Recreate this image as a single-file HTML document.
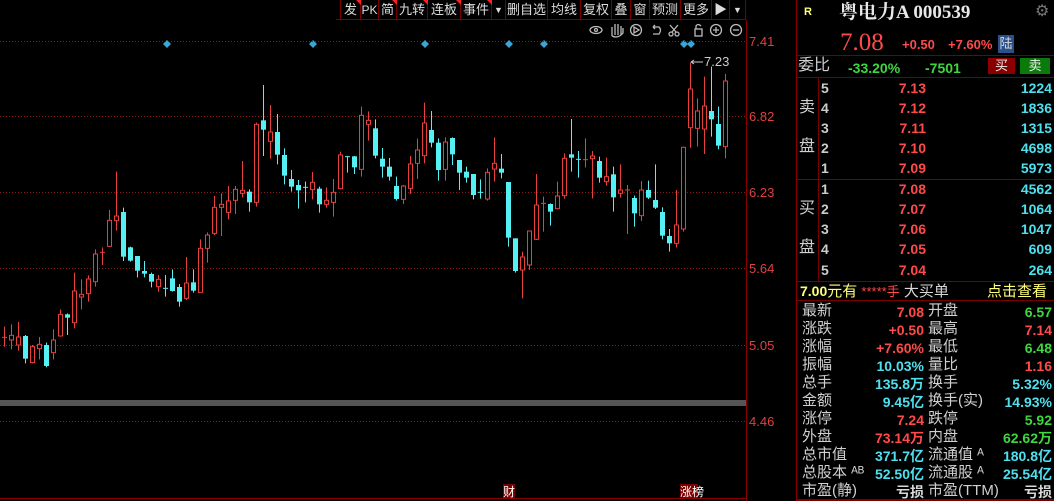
<!DOCTYPE html>
<html><head><meta charset="utf-8">
<style>
*{margin:0;padding:0;box-sizing:border-box}
body{width:1054px;height:501px;background:#000;overflow:hidden;position:relative;font-family:"Liberation Sans","Noto Sans CJK SC",sans-serif;}
.a{position:absolute;white-space:nowrap;line-height:1}
.tb{position:absolute;top:0;height:20px;border-right:1px solid #7a0000;color:#ddd;font-size:13px;line-height:20px;text-align:center;white-space:nowrap;overflow:hidden}
.r{color:#ff4a4a}.g{color:#3fd63f}.c{color:#4fe0ef}.w{color:#d8d8d8}.y{color:#ffff7a}
.hl{position:absolute;left:797px;width:257px;height:1px;background:#7a0000}
.lab{position:absolute;font-size:15px;color:#d0d0d0;line-height:1;left:802px;white-space:nowrap}
.v{position:absolute;font-size:14px;font-weight:bold;line-height:1;text-align:right}
</style></head><body>
<div style="position:absolute;left:336px;top:0;width:410px;height:20px;border-bottom:1px solid #7a0000"></div>
<div class="tb" style="left:340px;width:21px;border-left:1px solid #7a0000">发</div>
<div class="tb" style="left:361px;width:18px;font-size:12px">PK</div>
<div class="tb" style="left:379px;width:18px">简</div>
<div class="tb" style="left:397px;width:31px">九转</div>
<div class="tb" style="left:428px;width:33px">连板</div>
<div class="tb" style="left:461px;width:31px">事件</div>
<div class="tb" style="left:492px;width:14px;font-size:9px">▼</div>
<div class="tb" style="left:506px;width:42px">删自选</div>
<div class="tb" style="left:548px;width:33px">均线</div>
<div class="tb" style="left:581px;width:31px">复权</div>
<div class="tb" style="left:612px;width:19px">叠</div>
<div class="tb" style="left:631px;width:19px">窗</div>
<div class="tb" style="left:650px;width:31px">预测</div>
<div class="tb" style="left:681px;width:31px">更多</div>
<div class="tb" style="left:712px;width:18px">▶</div>
<div class="tb" style="left:730px;width:16px;font-size:9px">▼</div>
<svg style="position:absolute;left:0;top:0" width="800" height="60">
<g fill="#ff2020"><polygon points="356,0 361,0 361,5"/><polygon points="392,0 397,0 397,5"/><polygon points="423,0 428,0 428,5"/><polygon points="456,0 461,0 461,5"/><polygon points="487,0 492,0 492,5"/></g>
<g fill="none" stroke="#bbb" stroke-width="1.3">
<ellipse cx="596" cy="30" rx="6" ry="3.5"/><circle cx="596" cy="30" r="1.5"/>
<path d="M612 36 V27 M615 35 V24 M618 35 V24 M621 35 V26 M612 36 Q618 39 623 33 V28"/>
<circle cx="636" cy="30" r="5.5"/><path d="M634 27 L639 30 L634 33Z"/>
<path d="M653 27 H659 Q662 30 659 34 H653 M653 27 L655 25 M653 27 L655 29"/>
<circle cx="671" cy="34" r="2"/><circle cx="677" cy="34" r="2"/><path d="M672 32 L678 25 M676 32 L670 25"/>
<rect x="695" y="29" width="7" height="7"/><path d="M696 29 V26 Q698 23 701 26"/>
<circle cx="716" cy="30" r="5.5"/><path d="M713 30 H719 M716 27 V33"/>
<circle cx="736" cy="30" r="5.5"/><path d="M733 30 H739"/>
</g>
<g fill="#3aa6d6"><path d="M167 40 l4 4 -4 4 -4 -4z"/><path d="M313 40 l4 4 -4 4 -4 -4z"/><path d="M425 40 l4 4 -4 4 -4 -4z"/><path d="M509 40 l4 4 -4 4 -4 -4z"/><path d="M544 40 l4 4 -4 4 -4 -4z"/><path d="M684 40 l4 4 -4 4 -4 -4z"/><path d="M691 40 l4 4 -4 4 -4 -4z"/></g>
</svg>
<svg id="ch" style="position:absolute;left:0;top:0" width="797" height="501">
<g stroke="#8a1a1a" stroke-dasharray="1,2" stroke-width="1">
<line x1="0" y1="41.5" x2="746" y2="41.5"/><line x1="0" y1="116.5" x2="746" y2="116.5"/><line x1="0" y1="192.5" x2="746" y2="192.5"/><line x1="0" y1="268.5" x2="746" y2="268.5"/><line x1="0" y1="345.5" x2="746" y2="345.5"/><line x1="0" y1="421.5" x2="746" y2="421.5"/>
</g>
<rect x="0" y="400" width="746" height="6" fill="#555"/>
<line x1="746.5" y1="20" x2="746.5" y2="501" stroke="#8a0000"/>
<line x1="0" y1="498.5" x2="746" y2="498.5" stroke="#8a0000"/>
<line x1="796.5" y1="0" x2="796.5" y2="501" stroke="#8a0000"/>
<g fill="#e04040" font-size="13" font-family="Liberation Sans"><text x="749" y="46">7.41</text><text x="749" y="121">6.82</text><text x="749" y="197">6.23</text><text x="749" y="273">5.64</text><text x="749" y="350">5.05</text><text x="749" y="426">4.46</text></g>
<text x="704" y="66" fill="#ccc" font-size="13" font-family="Liberation Sans">7.23</text>
<path d="M691 62 H703 M691 62 l3 -2 M691 62 l3 2" stroke="#ccc" fill="none"/>
<rect x="503" y="484" width="12" height="14" fill="#7a0000"/><text x="503" y="496" fill="#fff" font-size="12">财</text>
<rect x="680" y="484" width="18" height="14" fill="#7a0000"/><text x="680" y="496" fill="#fff" font-size="12">涨榜</text>
</svg>
<script>
var A=[[772,772,740,800,1],[766,780,733,808,1],[771,795,726,812,1],[768,836,765,850,0],[800,848,795,850,1],[793,806,771,838,1],[795,858,788,862,0],[780,818,748,838,1],[703,768,688,770,1],[703,713,700,765,0],[633,728,578,745,1],[643,651,598,688,1],[597,641,586,665,1],[522,605,508,620,1],[517,517,502,555,1],[421,499,390,500,1],[408,422,275,452,1],[396,530,383,543,0],[502,542,500,545,0],[528,572,528,592,0],[573,581,543,592,0],[582,605,578,622,0],[598,620,585,635,1],[625,625,585,650,0],[595,633,568,635,0],[621,665,612,680,0],[609,655,531,660,1],[607,632,568,638,0],[505,637,478,637,1],[465,505,457,548,1],[382,460,348,465,1],[373,382,340,468,1],[363,397,318,418,1],[328,361,318,402,1],[331,340,243,352,1],[335,367,328,395,0],[133,367,128,380,1],[121,149,15,228,0],[156,184,75,236,1],[156,224,102,253,0],[225,287,205,313,0],[297,320,270,335,0],[315,331,300,386,0],[322,322,305,367,0],[307,329,276,358,1],[326,373,320,398,0],[361,373,322,383,1],[337,367,297,410,1],[225,326,215,328,1],[230,234,228,278,0],[229,262,228,282,0],[106,268,80,290,1],[121,133,94,182,1],[145,227,118,235,0]];
var B=[[326,350,294,383,0],[350,380,324,392,0],[408,447,380,452,0],[408,448,405,462,1],[342,415,318,432,1],[300,340,266,387,1],[219,317,158,340,1],[240,278,183,292,0],[278,360,265,392,0],[276,358,262,392,1],[264,313,262,345,0],[330,368,330,420,0],[365,383,350,398,0],[372,435,372,448,0],[427,427,388,446,0],[367,447,355,452,1],[340,357,262,395,1],[356,368,312,385,0],[396,563,396,590,0],[565,663,565,668,0],[621,660,605,745,1],[543,645,543,660,1],[465,568,372,570,1],[460,460,440,545,1],[462,485,460,527,0],[438,476,395,478,1],[325,437,310,446,1],[313,323,207,365,0],[328,328,303,383,0],[329,329,265,352,1],[318,326,303,445,1],[333,383,320,398,0],[380,395,323,407,1],[373,442,350,485,0],[420,430,343,443,1],[420,420,405,552,1],[444,490,437,530,0],[420,497,393,513,1],[420,443,392,447,0],[450,473,343,477,0],[486,557,472,568,0],[558,580,537,605,0],[525,580,420,593,1],[292,537,290,545,1],[117,233,37,293,1],[183,235,145,290,1],[168,237,80,312,1],[183,208,50,260,0],[222,287,170,298,0],[93,290,72,325,1]];
var s='',ns='http://www.w3.org/2000/svg';
function add(o,c,h,l,red,x){var R='#e8403c',C='#54f0f4';var xc=Math.round(x)+0.5;
s+='<line x1="'+xc+'" x2="'+xc+'" y1="'+h+'" y2="'+l+'" stroke="'+(red?R:C)+'"/>';
var t=Math.min(o,c),b=Math.max(o,c);if(b-t<1.5){s+='<line x1="'+(xc-2.5)+'" x2="'+(xc+2.5)+'" y1="'+t+'" y2="'+t+'" stroke="'+(red?R:C)+'"/>';return;}
if(red)s+='<rect x="'+(xc-2)+'" y="'+t+'" width="4" height="'+(b-t)+'" fill="#000" stroke="'+R+'"/>';
else s+='<rect x="'+(xc-2.5)+'" y="'+t+'" width="5" height="'+(b-t)+'" fill="'+C+'"/>';}
A.forEach(function(d,i){add(80+d[0]/3,80+d[1]/3,80+d[2]/3,80+d[3]/3,d[4],4.33+7*i);});
B.forEach(function(d,i){add(50+d[0]/3,50+d[1]/3,50+d[2]/3,50+d[3]/3,d[4],4.33+7*(54+i));});
var g=document.createElementNS(ns,'g');document.getElementById('ch').appendChild(g);g.innerHTML=s;
</script>
<div class="a y" style="left:804px;top:7px;font-size:11px;font-weight:bold">R</div>
<div class="a w" style="left:839px;top:3px;font-size:19px;font-weight:bold;font-family:'Liberation Serif','Noto Serif CJK SC',serif;color:#e8e8e8">粤电力A 000539</div>
<div class="a" style="left:1035px;top:4px;font-size:16px;color:#777">⚙</div>
<div class="a r" style="left:840px;top:30px;font-size:25px;font-family:'Liberation Serif',serif">7.08</div>
<div class="a r" style="left:902px;top:38px;font-size:13px;font-weight:bold">+0.50</div>
<div class="a r" style="left:948px;top:38px;font-size:13px;font-weight:bold">+7.60%</div>
<div class="a" style="left:998px;top:35px;width:16px;height:18px;background:#2a4f8a;color:#ddd;font-size:13px;line-height:18px;text-align:center">陆</div>
<div class="hl" style="top:55px"></div>
<div class="lab" style="top:58px;left:798px;font-size:16px">委比</div>
<div class="v g" style="left:848px;top:61px">-33.20%</div>
<div class="v g" style="left:925px;top:61px">-7501</div>
<div class="a" style="left:988px;top:58px;width:27px;height:16px;background:#8a0000;color:#eee;font-size:13px;line-height:16px;text-align:center">买</div>
<div class="a" style="left:1020px;top:58px;width:30px;height:16px;background:#0a7a0a;color:#eee;font-size:13px;line-height:16px;text-align:center">卖</div>
<div class="hl" style="top:77px"></div>
<div class="a" style="left:818px;top:78px;width:1px;height:203px;background:#7a0000"></div>
<div class="lab" style="left:799px;top:100px;font-size:16px">卖</div><div class="lab" style="left:799px;top:139px;font-size:16px">盘</div>
<div class="lab" style="left:799px;top:201px;font-size:16px">买</div><div class="lab" style="left:799px;top:240px;font-size:16px">盘</div>
<div class="hl" style="top:179px"></div>
<div class="hl" style="top:281px"></div>
<div id="ob"></div>
<div class="a y" style="left:800px;top:284px;font-size:15px"><b style="font-size:14px">7.00</b>元有 <span class="r" style="font-size:13px">*****手</span> <span class="w">大买单</span></div>
<div class="a y" style="left:987px;top:284px;font-size:15px">点击查看</div>
<div class="hl" style="top:300px"></div>
<div id="st"></div>
<script>
var ob=[['5','7.13','1224',81],['4','7.12','1836',101],['3','7.11','1315',121],['2','7.10','4698',141],['1','7.09','5973',161],['1','7.08','4562',182],['2','7.07','1064',202],['3','7.06','1047',222],['4','7.05','609',242],['5','7.04','264',263]];
var h='';ob.forEach(function(r){h+='<div class="v w" style="left:821px;top:'+r[3]+'px;color:#ccc">'+r[0]+'</div><div class="v r" style="left:880px;width:46px;top:'+r[3]+'px">'+r[1]+'</div><div class="v c" style="left:990px;width:62px;top:'+r[3]+'px">'+r[2]+'</div>';});
document.getElementById('ob').innerHTML=h;
var st=[['最新','7.08','r','开盘','6.57','g'],['涨跌','+0.50','r','最高','7.14','r'],['涨幅','+7.60%','r','最低','6.48','g'],['振幅','10.03%','c','量比','1.16','r'],['总手','135.8万','c','换手','5.32%','c'],['金额','9.45亿','c','换手(实)','14.93%','c'],['涨停','7.24','r','跌停','5.92','g'],['外盘','73.14万','r','内盘','62.62万','g'],['总市值','371.7亿','c','流通值 ᴬ','180.8亿','c'],['总股本 ᴬᴮ','52.50亿','c','流通股 ᴬ','25.54亿','c'],['市盈(静)','亏损','w','市盈(TTM)','亏损','w']];
h='';st.forEach(function(r,i){var t=303+i*18;h+='<div class="lab" style="top:'+t+'px">'+r[0]+'</div><div class="v '+r[2]+'" style="left:850px;width:74px;top:'+(t+2)+'px">'+r[1]+'</div><div class="lab" style="left:928px;top:'+t+'px">'+r[3]+'</div><div class="v '+r[5]+'" style="left:990px;width:62px;top:'+(t+2)+'px">'+r[4]+'</div>';});
document.getElementById('st').innerHTML=h;
</script>
<div class="a" style="left:797px;top:499px;width:257px;height:2px;background:#7a0000"></div>
</body></html>
